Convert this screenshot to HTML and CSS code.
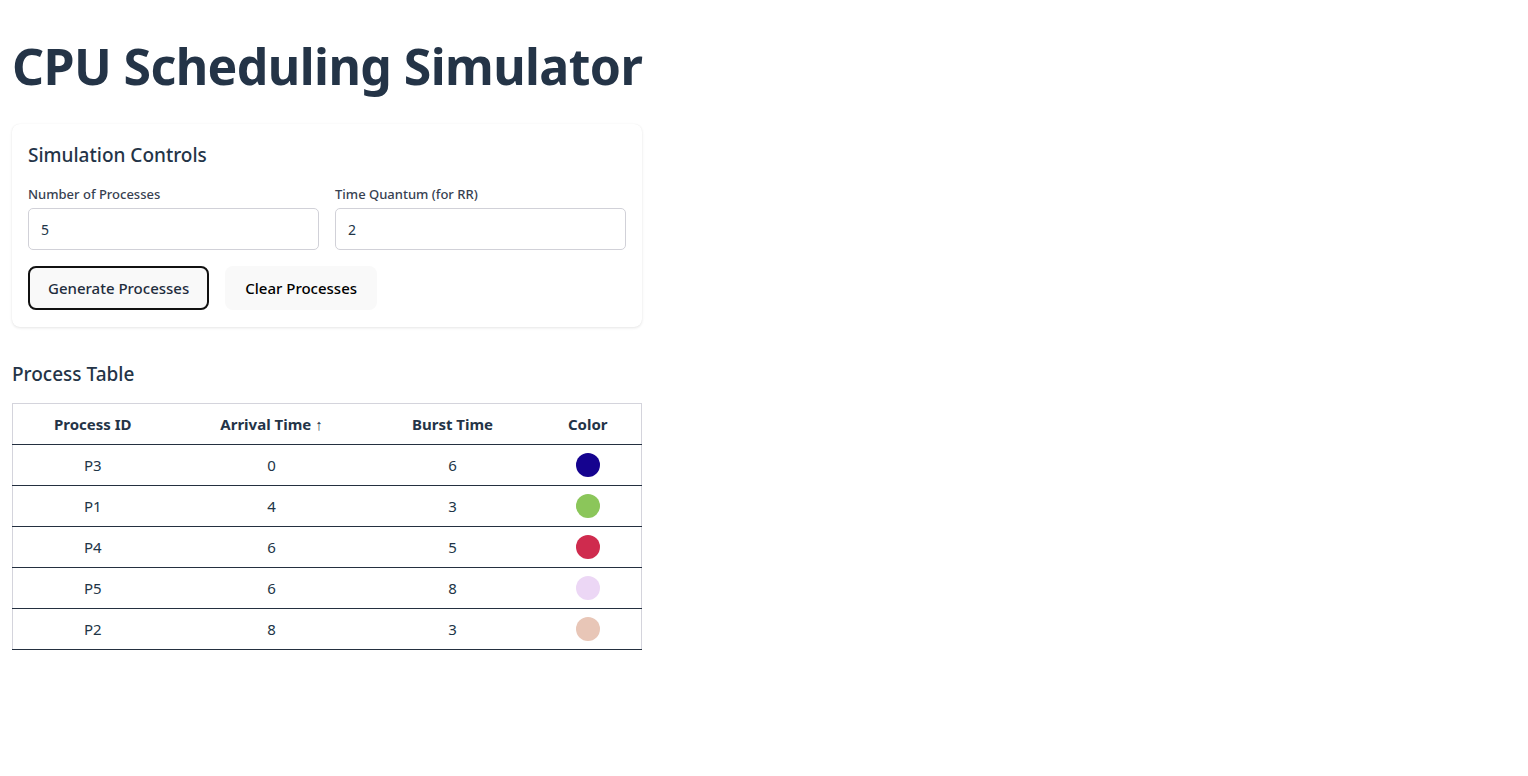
FILE: index.html
```html
<!DOCTYPE html>
<html lang="en">
<head>
<meta charset="utf-8">
<title>CPU Scheduling Simulator</title>
<link rel="stylesheet" href="styles.css">
</head>
<body>
<div class="app">
  <h1 class="title">CPU Scheduling Simulator</h1>
  <section class="card">
    <h3 class="card-title">Simulation Controls</h3>
    <div class="fields">
      <label class="field">
        <span class="field-label">Number of Processes</span>
        <input class="field-input" type="text" value="5">
      </label>
      <label class="field">
        <span class="field-label">Time Quantum (for RR)</span>
        <input class="field-input" type="text" value="2">
      </label>
    </div>
    <div class="actions">
      <button class="btn btn-focus">Generate Processes</button>
      <button class="btn">Clear Processes</button>
    </div>
  </section>
  <h2 class="section-title">Process Table</h2>
  <table class="ptable">
    <colgroup>
      <col class="c1"><col class="c2"><col class="c3"><col class="c4">
    </colgroup>
    <thead>
      <tr><th>Process ID</th><th>Arrival Time ↑</th><th>Burst Time</th><th>Color</th></tr>
    </thead>
    <tbody>
      <tr><td>P3</td><td>0</td><td>6</td><td><span class="dot" style="background:#15038f"></span></td></tr>
      <tr><td>P1</td><td>4</td><td>3</td><td><span class="dot" style="background:#8bc65a"></span></td></tr>
      <tr><td>P4</td><td>6</td><td>5</td><td><span class="dot" style="background:#cf2b4e"></span></td></tr>
      <tr><td>P5</td><td>6</td><td>8</td><td><span class="dot" style="background:#ecd7f5"></span></td></tr>
      <tr><td>P2</td><td>8</td><td>3</td><td><span class="dot" style="background:#e8c6b7"></span></td></tr>
    </tbody>
  </table>
</div>
</body>
</html>
```
FILE: styles.css
```css
* { box-sizing: border-box; }
body {
  margin: 0;
  background: #ffffff;
  color: #213547;
  font-family: "Noto Sans", "Open Sans", sans-serif;
}
.app {
  width: 654px;
  padding: 0 12px;
}
.title {
  margin: 38px 0 30px;
  font-size: 50px;
  line-height: 56px;
  font-weight: 700;
  color: #243447;
  letter-spacing: -0.6px;
  white-space: nowrap;
}
.card {
  background: #fff;
  border-radius: 8px;
  padding: 16px 16px 17px;
  box-shadow: 0 1px 3px rgba(0,0,0,0.10), 0 0 1px rgba(0,0,0,0.06);
}
.card-title {
  margin: 0 0 14px;
  font-size: 19px;
  line-height: 30px;
  font-weight: 500;
  color: #243447;
}
.fields {
  display: grid;
  grid-template-columns: 1fr 1fr;
  gap: 16px;
}
.field {
  display: flex;
  flex-direction: column;
  gap: 4px;
}
.field-label {
  font-size: 13px;
  line-height: 20px;
  font-weight: 500;
  color: #374151;
}
.field-input {
  height: 42px;
  border: 1px solid #d1d1d8;
  border-radius: 5px;
  padding: 0 12px;
  font: inherit;
  font-size: 14px;
  color: #213547;
  background: #fff;
  outline: none;
}
.actions {
  display: flex;
  gap: 16px;
  margin-top: 16px;
}
.btn {
  height: 44px;
  padding: 0 19px;
  border: 1px solid transparent;
  border-radius: 8px;
  background: #f9f9f9;
  font: inherit;
  font-size: 15px;
  font-weight: 500;
  color: #000;
  cursor: pointer;
}
.btn-focus {
  border: 2px solid #111;
  padding: 0 18px;
  color: #1f2d3d;
}
.section-title {
  margin: 32px 0 14px;
  font-size: 19px;
  line-height: 30px;
  font-weight: 500;
  color: #243447;
}
.ptable {
  width: 629px;
  border-collapse: collapse;
  table-layout: fixed;
  border: 1px solid #d4d4dc;
  border-bottom: none;
  font-size: 15px;
}
.c1 { width: 160px; }
.c2 { width: 198px; }
.c3 { width: 164px; }
.c4 { width: 107px; }
.ptable th,
.ptable td {
  height: 41px;
  padding: 0;
  text-align: center;
  vertical-align: middle;
  border-bottom: 1px solid #243040;
}
.ptable th {
  font-weight: 700;
  color: #243447;
}
.ptable td {
  color: #213547;
}
.dot {
  display: inline-block;
  width: 24px;
  height: 24px;
  border-radius: 50%;
  vertical-align: middle;
}
```
